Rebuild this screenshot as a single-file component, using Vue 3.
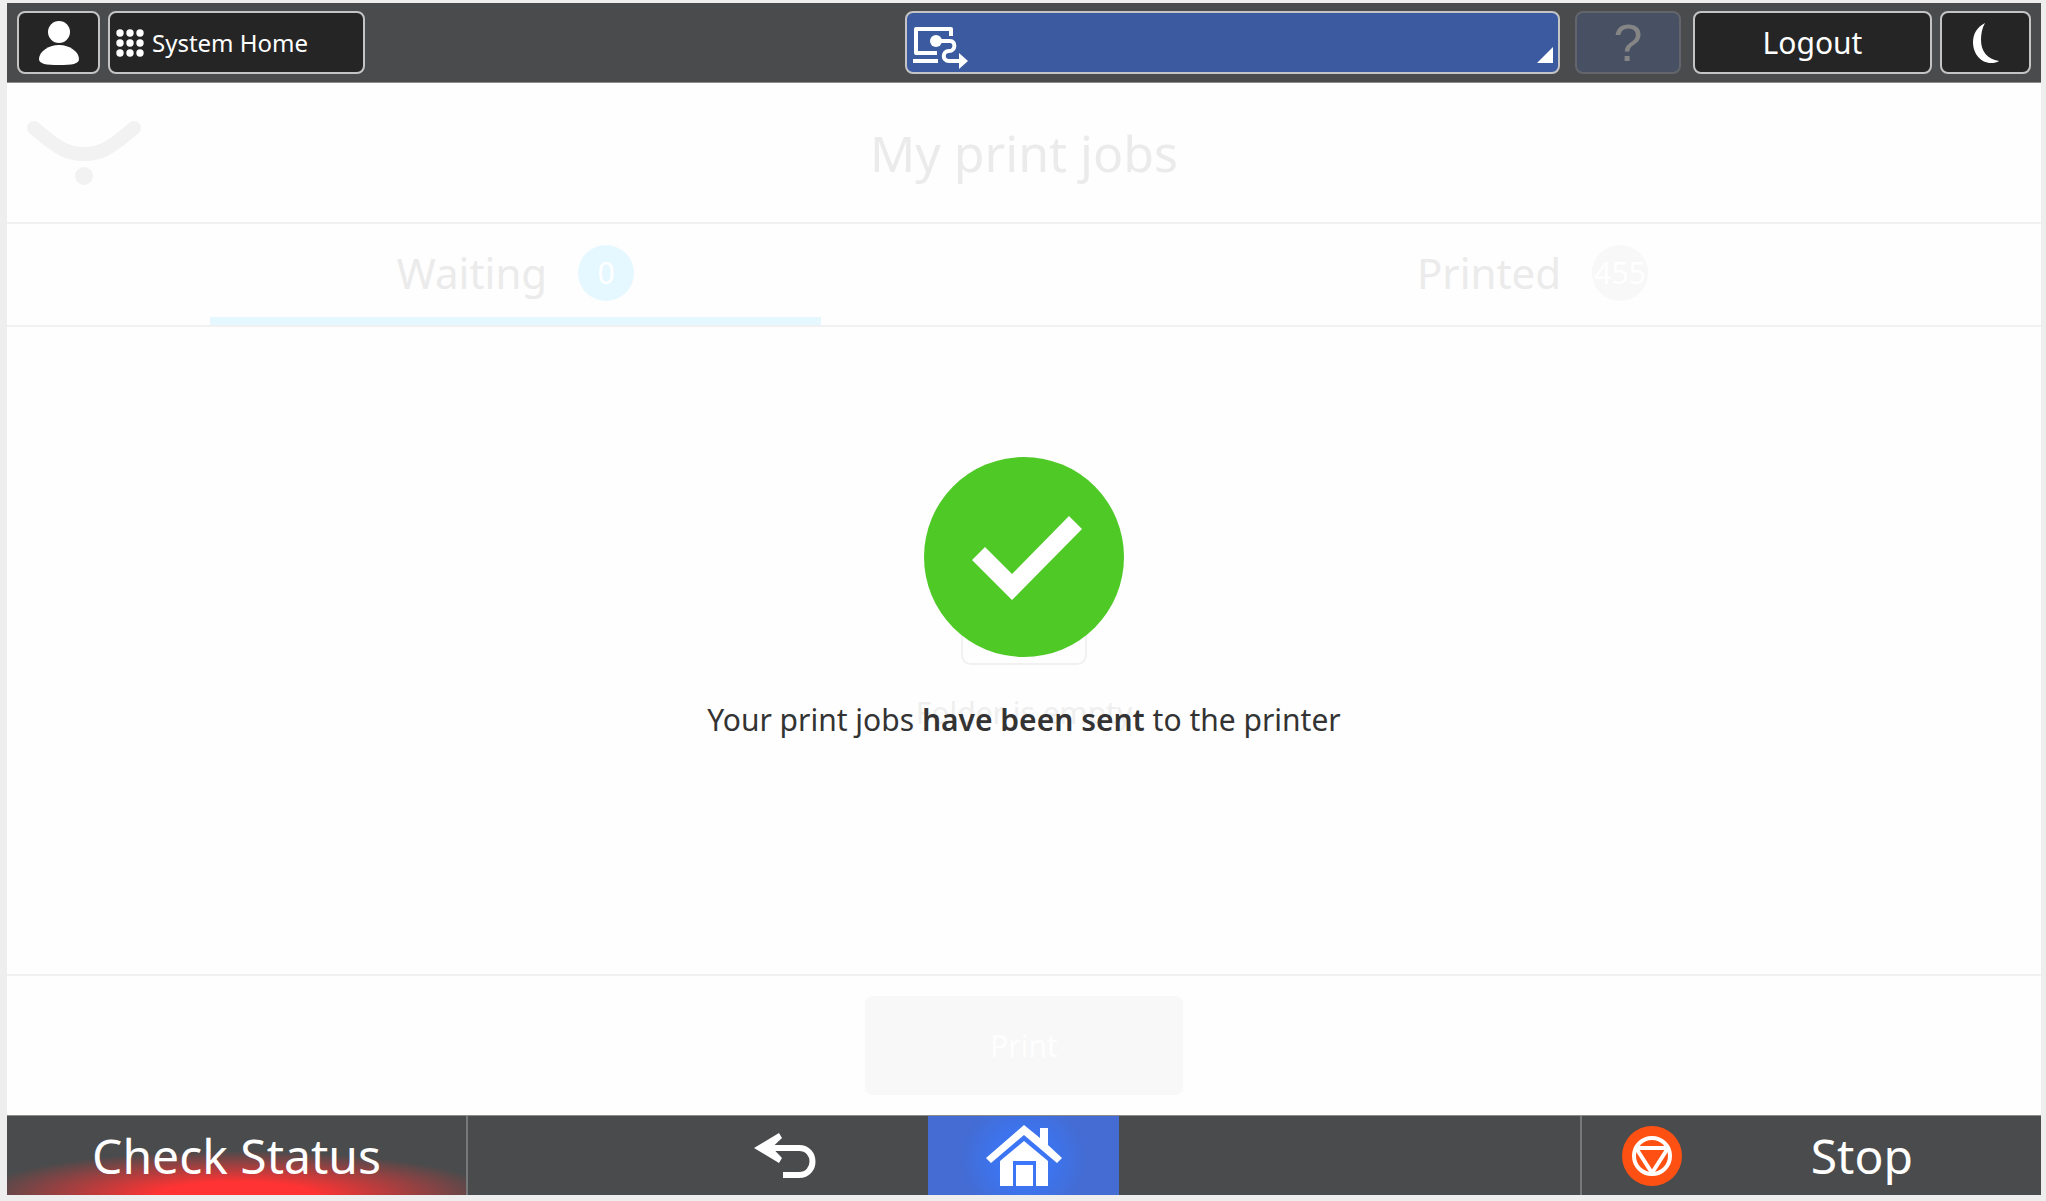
<template>
  <div class="panel">
    <header class="topbar">
      <button class="key user" aria-label="User">
        <svg width="40" height="44" viewBox="0 0 40 44" fill="#fff">
          <ellipse cx="20" cy="11" rx="11" ry="11" />
          <path d="M20 24c11 0 20 7 20 14 0 5-7 6-20 6S0 43 0 38c0-7 9-14 20-14z" />
        </svg>
      </button>
      <button class="key home-key">
        <svg width="28" height="28" viewBox="0 0 28 28" fill="#fff">
          <circle v-for="d in dots" :key="d.id" :cx="d.x" :cy="d.y" r="3.7" />
        </svg>
        <span>System Home</span>
      </button>

      <button class="key status" aria-label="Status">
        <svg width="60" height="54" viewBox="0 -4 60 54" fill="none" stroke="#fff" stroke-width="4">
          <path d="M41 16V9H6v24h21" stroke-linejoin="round" />
          <path d="M3 41h25" />
          <path d="M26 21h14c6 0 6 10-1 10s-7 10 0 10h11" />
          <circle cx="26" cy="21" r="6" fill="#fff" stroke="none" />
          <path d="M49 33v16l9-8z" fill="#fff" stroke="none" />
        </svg>
        <svg width="16" height="16" viewBox="0 0 16 16" class="corner">
          <path d="M16 0v16H0z" fill="#fff" />
        </svg>
      </button>
      <button class="key help" disabled>?</button>
      <button class="key logout">Logout</button>
      <button class="key sleep" aria-label="Sleep">
        <svg width="26" height="40" viewBox="0 0 26 40" fill="#fff">
          <path d="M12 0C4 4 0 11 0 19c0 12 8 21 18 21 3 0 6-.5 8-2C14 36 8 28 8 17 8 11 9 5 12 0z" />
        </svg>
      </button>
    </header>

    <main class="screen">
      <div class="title">
        <svg class="logo" width="114" height="64" viewBox="0 0 114 64">
          <path d="M7 7C34 30 42 33 57 33S80 30 107 7" fill="none" stroke="#f2f2f2" stroke-width="14" stroke-linecap="round" />
          <circle cx="57" cy="55" r="9" fill="#f2f2f2" />
        </svg>
        <h1>My print jobs</h1>
      </div>

      <nav class="tabs">
        <button v-for="t in tabs" :key="t.name" class="tab" :class="{ active: t.name === current }" @click="current = t.name">
          <span>{{ t.name }}</span>
          <span class="badge">{{ t.count }}</span>
        </button>
      </nav>

      <section class="jobs">
        <div class="folder"></div>
        <p class="empty">Folder is empty</p>
        <div class="done" role="status">
          <svg width="200" height="200" viewBox="0 0 200 200">
            <circle cx="100" cy="100" r="100" fill="#4ec926" />
            <path d="M48 103l13-13 27 27 57-58 13 13-70 71z" fill="#fff" />
          </svg>
          <p>Your print jobs <b>have been sent</b> to the printer</p>
        </div>
      </section>

      <div class="actions">
        <button class="print" disabled>Print</button>
      </div>
    </main>

    <footer class="bottombar">
      <button class="check">Check Status</button>
      <div class="nav">
        <button class="back" aria-label="Back">
          <svg width="62" height="46" viewBox="0 0 62 46">
            <path d="M16 15h29c18 0 18 27 0 27H29" fill="none" stroke="#fff" stroke-width="6" />
            <path d="M0 15L25 0l3 5-10 9.500L28 25l-3 5z" fill="#fff" />
          </svg>
        </button>
        <button class="home" aria-label="Home">
          <svg width="76" height="62" viewBox="0 0 76 62" fill="#fff">
            <path d="M0 33L38 0l16 13V3h8v17l14 13-5 5L38 10 5 38z" />
            <path d="M14 61V36l24-20 24 20v25H50V36H27v25z" />
            <path d="M30 40h17v21H30z" />
          </svg>
        </button>
      </div>
      <button class="stop">
        <svg width="60" height="60" viewBox="0 0 60 60">
          <circle cx="30" cy="30" r="30" fill="#ff5014" />
          <g fill="none" stroke="#fff" stroke-width="4">
            <circle cx="30" cy="30" r="18" />
            <path d="M14 22h32L30 47z" stroke-linejoin="round" />
          </g>
        </svg>
        <span>Stop</span>
      </button>
    </footer>
  </div>
</template>

<script setup>
import { ref } from "vue";

const current = ref("Waiting");

const tabs = [
  { name: "Waiting", count: 0 },
  { name: "Printed", count: 455 },
];

// 3x3 grid of dots for the System Home key
const dots = Array.from({ length: 9 }, (_, i) => ({
  id: i,
  x: 4 + (i % 3) * 10,
  y: 4 + Math.floor(i / 3) * 10,
}));
</script>

<style>
body {
  margin: 0;
  background: #eee;
}
</style>

<style scoped>
.panel {
  box-sizing: border-box;
  min-height: 100vh;
  padding: 3px 5px 6px 7px;
  display: flex;
  flex-direction: column;
  font-family: "Noto Sans", sans-serif;
  color: #333;
}

button {
  box-sizing: border-box;
  margin: 0;
  padding: 0;
  border: 0;
  background: none;
  font-family: inherit;
  color: #fff;
  display: flex;
  align-items: center;
  justify-content: center;
}

svg {
  display: block;
  flex: none;
}

h1,
p {
  margin: 0;
  font-weight: 400;
}

/* top bar */
.topbar {
  box-sizing: border-box;
  height: 80px;
  padding: 8px 10px;
  display: flex;
  gap: 8px;
  background: #4a4b4c;
  border-bottom: 1px solid #8c8c88;
}

.key {
  height: 63px;
  border: 2px solid #c4c4c4;
  border-radius: 8px;
  background: #252525;
}

.user {
  width: 83px;
}

.home-key {
  width: 257px;
  padding-left: 6px;
  justify-content: flex-start;
  gap: 8px;
  font-size: 24px;
}

.status {
  width: 655px;
  margin-left: auto;
  padding: 0 5px 0 3px;
  justify-content: space-between;
  background: #3c5aa0;
}

.corner {
  align-self: flex-end;
  margin-bottom: 9px;
}

.help {
  width: 106px;
  margin: 0 4px 0 7px;
  border-color: #62666c;
  background: #485064;
  color: #858585;
  font-family: "Liberation Sans", sans-serif;
  font-size: 52px;
}

.logout {
  width: 239px;
  font-size: 30px;
}

.sleep {
  width: 91px;
}

/* screen */
.screen {
  flex: 1;
  display: flex;
  flex-direction: column;
  background: #fefefe;
}

.title {
  height: 139px;
  display: grid;
  grid-template-columns: 1fr auto 1fr;
  align-items: center;
  border-bottom: 2px solid #f1f1f1;
}

.logo {
  margin-left: 20px;
}

h1 {
  font-size: 50px;
  line-height: 68px;
  color: #ebebeb;
}

.tabs {
  display: grid;
  grid-template-columns: 1fr 1fr;
  border-bottom: 2px solid #f1f1f1;
}

.tab {
  position: relative;
  height: 101px;
  padding-bottom: 4px;
  gap: 31px;
  font-size: 42px;
  color: #ebebeb;
}

.tab.active::after {
  content: "";
  position: absolute;
  left: 20%;
  right: 20%;
  bottom: 0;
  height: 8px;
  background: #e5f8ff;
}

.badge {
  width: 56px;
  height: 56px;
  border-radius: 50%;
  background: #f8f8f8;
  color: #fff;
  font-size: 30px;
  line-height: 56px;
  display: flex;
  justify-content: center;
}

.active .badge {
  background: #e5f8ff;
}

.jobs {
  position: relative;
  flex: 1;
  padding-top: 20px;
  display: flex;
  flex-direction: column;
  align-items: center;
  justify-content: center;
}

.folder {
  box-sizing: border-box;
  width: 126px;
  height: 80px;
  border: 2px solid #f1f1f1;
  border-radius: 10px;
}

.empty {
  margin-top: 24px;
  font-size: 30px;
  line-height: 48px;
  color: #efefef;
}

/* message laid over the faded job list */
.done {
  position: absolute;
  inset: 0;
  padding-bottom: 100px;
  display: flex;
  flex-direction: column;
  align-items: center;
  justify-content: center;
  gap: 39px;
}

.done p {
  font-size: 30px;
  line-height: 48px;
}

.done b {
  font-weight: 600;
}

.actions {
  height: 139px;
  display: flex;
  align-items: center;
  justify-content: center;
  border-top: 2px solid #f1f1f1;
}

.print {
  width: 318px;
  height: 99px;
  border-radius: 8px;
  background: #f8f8f8;
  color: #fefefe;
  font-size: 30px;
}

/* bottom bar */
.bottombar {
  box-sizing: border-box;
  height: 80px;
  display: flex;
  background: #4a4b4c;
  border-top: 1px solid #8c8c88;
  font-size: 48px;
}

.bottombar button {
  font-size: inherit;
}

.check {
  width: 461px;
  border-right: 2px solid #77787a;
  background: radial-gradient(ellipse 260px 44px at 50% 100%, #ff3333 0%, #ff3333 30%, rgba(255, 51, 51, 0) 100%);
}

.nav {
  flex: 1;
  display: flex;
  justify-content: flex-end;
  padding-right: 461px;
}

.back {
  width: 286px;
}

.home {
  width: 191px;
  background: radial-gradient(circle at 50% 55%, #3c78ff 0%, #3c74f0 25%, #446cd2 60%);
}

.stop {
  width: 461px;
  padding: 0 128px 0 40px;
  justify-content: space-between;
  border-left: 2px solid #77787a;
}
</style>
